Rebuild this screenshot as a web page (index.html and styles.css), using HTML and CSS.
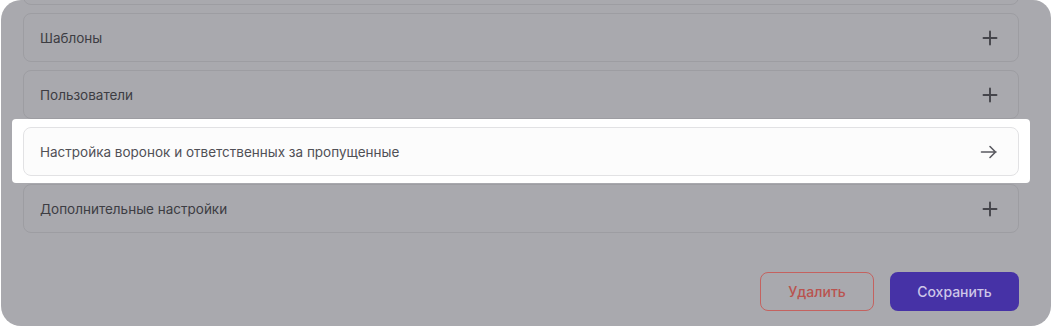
FILE: index.html
```html
<!DOCTYPE html>
<html lang="ru">
<head>
  <meta charset="UTF-8" />
  <meta name="viewport" content="width=device-width, initial-scale=1.0"/>
  <title>Настройки</title>
  <link rel="stylesheet" href="styles.css">
</head>
<body>
  <div class="panel">
    <div class="sections">
      <!-- row above, scrolled out of view -->
      <div class="section"></div>

      <div class="section">
        <span class="section-title">Шаблоны</span>
        <svg class="icon" viewBox="0 0 16 16"><path d="M8 1.5v13M1.5 8h13"/></svg>
      </div>

      <div class="section">
        <span class="section-title">Пользователи</span>
        <svg class="icon" viewBox="0 0 16 16"><path d="M8 1.5v13M1.5 8h13"/></svg>
      </div>

      <!-- onboarding hint highlights this row -->
      <div class="spotlight">
        <div class="section section-active">
          <span class="section-title">Настройка воронок и ответственных за пропущенные</span>
          <svg class="icon icon-arrow" viewBox="0 0 18 16"><path d="M1.5 8h14.5M10 2.5L15.5 8 10 13.5"/></svg>
        </div>
      </div>

      <div class="section">
        <span class="section-title">Дополнительные настройки</span>
        <svg class="icon" viewBox="0 0 16 16"><path d="M8 1.5v13M1.5 8h13"/></svg>
      </div>
    </div>

    <div class="actions">
      <button class="btn btn-delete">Удалить</button>
      <button class="btn btn-save">Сохранить</button>
    </div>
  </div>
</body>
</html>
```

FILE: styles.css
```css
body {
  margin: 0;
  font-family: Inter, "Noto Sans", sans-serif;
  background-color: #ffffff;
}

.panel {
  width: 1050px;
  height: 326px;
  margin-left: 1px;
  padding: 0 32px 0 22px;
  box-sizing: border-box;
  background-color: #a9a9ae;
  border-radius: 20px 18px 20px 20px;
  overflow: hidden;
}

.sections {
  display: flex;
  flex-direction: column;
  gap: 8px;
  margin-top: -44px;
}

.section {
  display: flex;
  align-items: center;
  justify-content: space-between;
  height: 49px;
  padding: 0 20px 0 16px;
  box-sizing: border-box;
  border: 1px solid #9d9da2;
  border-radius: 8px;
}

.section-title {
  font-size: 13.5px;
  color: #3d3d43;
}

.icon {
  width: 16px;
  height: 16px;
  fill: none;
  stroke: #45454b;
  stroke-width: 1.9;
  stroke-linecap: round;
  stroke-linejoin: round;
}

.spotlight {
  position: relative;
  z-index: 1;
}

.spotlight::before {
  content: "";
  position: absolute;
  top: -8px;
  left: -11px;
  right: -11px;
  bottom: -7px;
  background-color: #ffffff;
  border-radius: 4px;
  z-index: -1;
}

.section-active {
  background-color: #fcfcfc;
  border-color: #e2e2e4;
}

.section-active .section-title {
  color: #505056;
}

.section-active .icon-arrow {
  width: 18px;
  stroke: #5a5a60;
  stroke-width: 1.6;
}

.actions {
  display: flex;
  justify-content: flex-end;
  gap: 16px;
  margin-top: 39px;
}

.btn {
  height: 39px;
  font-family: inherit;
  font-size: 14px;
  font-weight: 500;
  border-radius: 8px;
  cursor: pointer;
}

.btn-delete {
  width: 114px;
  background-color: transparent;
  border: 1px solid #c4625f;
  color: #b9534f;
}

.btn-save {
  width: 129px;
  background-color: #4632a6;
  border: none;
  color: #cdc6e8;
}
```
